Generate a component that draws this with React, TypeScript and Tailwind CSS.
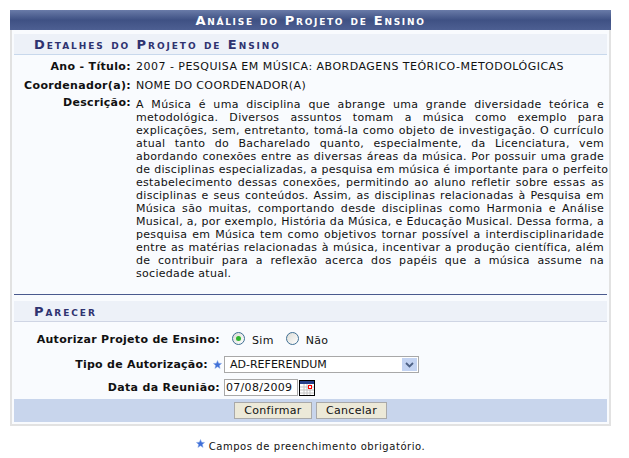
const font = "font-['DejaVu_Sans','Liberation_Sans',sans-serif]";

const descricao = [
  'A Música é uma disciplina que abrange uma grande diversidade teórica e',
  'metodológica. Diversos assuntos tomam a música como exemplo para',
  'explicações, sem, entretanto, tomá-la como objeto de investigação. O currículo',
  'atual tanto do Bacharelado quanto, especialmente, da Licenciatura, vem',
  'abordando conexões entre as diversas áreas da música. Por possuir uma grade',
  'de disciplinas especializadas, a pesquisa em música é importante para o perfeito',
  'estabelecimento dessas conexões, permitindo ao aluno refletir sobre essas as',
  'disciplinas e seus conteúdos. Assim, as disciplinas relacionadas à Pesquisa em',
  'Música são muitas, comportando desde disciplinas como Harmonia e Análise',
  'Musical, a, por exemplo, História da Música, e Educação Musical. Dessa forma, a',
  'pesquisa em Música tem como objetivos tornar possível a interdisciplinaridade',
  'entre as matérias relacionadas à música, incentivar a produção científica, além',
  'de contribuir para a reflexão acerca dos papéis que a música assume na',
];

const Star = ({ className }: { className: string }) => (
  <svg viewBox="0 0 10 10" className={className}>
    <path d="M5 .5 6.3 3.6 9.6 3.8 7.1 6 7.9 9.4 5 7.6 2.1 9.4 2.9 6 .4 3.8 3.7 3.6Z" fill="#3f6fd8" stroke="#8fb0ea" strokeWidth="0.5" />
  </svg>
);

const Radio = ({ checked }: { checked?: boolean }) => (
  <span className="w-[13px] h-[13px] -mt-[3px] rounded-full border border-[#3f6f94] bg-gradient-to-br from-[#dcdcd6] to-white flex items-center justify-center shrink-0">
    {checked && <span className="w-[5px] h-[5px] rounded-full bg-[#2fb52f]" />}
  </span>
);

const Calendar = () => (
  <svg viewBox="0 0 16 16" className="w-4 h-4 shrink-0 block">
    <rect x="0.5" y="0.5" width="15" height="15" fill="#fff" stroke="#000" />
    <rect x="1" y="1" width="14" height="3" fill="#27408b" />
    <path d="M5 4v11M8 4v11M11 4v11M1 7h14M1 10h14M1 13h14" stroke="#c4c4c4" strokeWidth="1" />
    <rect x="9.5" y="5.5" width="3" height="3" fill="#fff" stroke="#f00" />
  </svg>
);

const SectionTitle = ({ children, border }: { children: string; border: string }) => (
  <div className={`h-[21px] bg-[#edf1f8] border-b ${border} pl-[20px] flex items-center text-[13px] font-bold text-[#2f3370] tracking-[1.93px] [font-variant:small-caps]`}>
    {children}
  </div>
);

const App = () => {
  return (
    <div className={`w-[629px] h-[458px] bg-white pt-[10px] pl-[10px] text-[11px] leading-[13px] text-[#111] ${font}`}>
      <div className="w-[601px] h-[416px] border-2 border-t-0 border-[#e2e2e2] bg-[#f9fbfe] flex flex-col">
        <div className="h-[20px] -mx-[2px] bg-gradient-to-b from-[#6a7ba8] via-[#3f5184] to-[#4d5f92] text-white font-bold text-[13px] tracking-[1.72px] [font-variant:small-caps] flex items-center justify-center">
          Análise do Projeto de Ensino
        </div>

        <div className="flex-1 flex flex-col px-[2px] pt-[4px]">
          <SectionTitle border="border-[#c8d8ec]">Detalhes do Projeto de Ensino</SectionTitle>

          <div className="flex mt-[5px] h-[13px]">
            <div className="w-[117px] text-right font-bold tracking-[0.33px]">Ano - Título:</div>
            <div className="pl-[5px] tracking-[0.48px] whitespace-nowrap">2007 - PESQUISA EM MÚSICA: ABORDAGENS TEÓRICO-METODOLÓGICAS</div>
          </div>
          <div className="flex mt-[6px] h-[13px]">
            <div className="w-[117px] text-right font-bold tracking-[0.33px]">Coordenador(a):</div>
            <div className="pl-[5px] tracking-[0.36px]">NOME DO COORDENADOR(A)</div>
          </div>
          <div className="flex mt-[4px]">
            <div className="w-[117px] text-right font-bold tracking-[0.33px]">Descrição:</div>
            <div className="w-[468px] ml-[5px] pt-[2px] tracking-[0.3px]">
              {descricao.map((l) => (
                <div key={l} className="text-justify [text-align-last:justify] whitespace-nowrap">{l}</div>
              ))}
              <div>sociedade atual.</div>
            </div>
          </div>

          <div className="mt-[14px] border-t border-[#4a5a8e]" />
          <div className="mt-[6px]">
            <SectionTitle border="border-[#cfd5e4]">Parecer</SectionTitle>
          </div>

          <div className="flex items-center mt-[9px] h-[17px]">
            <div className="w-[206px] text-right font-bold tracking-[0.3px]">Autorizar Projeto de Ensino:</div>
            <div className="flex items-center ml-[12px] tracking-[0.3px]">
              <Radio checked />
              <span className="ml-[7px] mr-[12px] mt-[2px]">Sim</span>
              <Radio />
              <span className="ml-[7px] mt-[2px]">Não</span>
            </div>
          </div>
          <div className="flex items-center mt-[8px] h-[17px]">
            <div className="w-[194px] text-right font-bold tracking-[0.25px]">Tipo de Autorização:</div>
            <Star className="w-[9px] h-[9px] ml-[5px]" />
            <div className="ml-[2px] w-[195px] h-[17px] border border-[#a8a8a8] bg-white flex items-center justify-between pl-[5px]">
              <span>AD-REFERENDUM</span>
              <span className="w-[15px] h-[13px] mr-[1px] bg-[#c3d3f2] flex items-center justify-center">
                <svg viewBox="0 0 9 6" className="w-[9px] h-[6px]">
                  <path d="M1 1l3.5 3.5L8 1" fill="none" stroke="#4d6185" strokeWidth="1.8" />
                </svg>
              </span>
            </div>
          </div>
          <div className="flex items-center mt-[6px] h-[17px]">
            <div className="w-[206px] text-right font-bold tracking-[0.33px]">Data da Reunião:</div>
            <div className="ml-[4px] w-[74px] h-[17px] border border-[#a8a8a8] bg-white flex items-center pl-[1px] tracking-[0.3px]">07/08/2009</div>
            <span className="ml-[1px]"><Calendar /></span>
          </div>

          <div className="mt-[3px] h-[23px] bg-[#c8d5ec] flex items-center justify-center gap-[4px]">
            <button className="w-[78px] h-[17px] border border-[#a9a9a9] bg-[#ece9d8] text-[11px] leading-none tracking-[0.3px]">Confirmar</button>
            <button className="w-[71px] h-[17px] border border-[#a9a9a9] bg-[#ece9d8] text-[11px] leading-none tracking-[0.3px]">Cancelar</button>
          </div>
        </div>
      </div>

      <div className="w-[601px] mt-[15px] flex justify-center text-[10px] leading-[12px] tracking-[0.57px]">
        <span className="flex items-start">
          <Star className="w-[9px] h-[9px] mr-[4px] -mt-[2px]" />
          <span className="">Campos de preenchimento obrigatório.</span>
        </span>
      </div>
    </div>
  );
};

export default App;
